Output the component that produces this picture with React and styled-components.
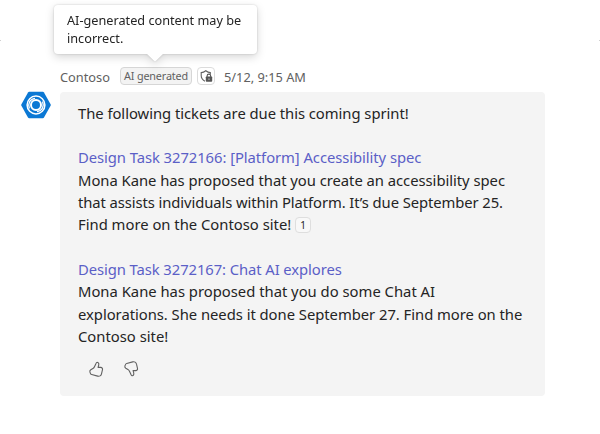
import React from "react";
import styled, { createGlobalStyle } from "styled-components";

const Global = createGlobalStyle`
  * { box-sizing: border-box; }
  body { margin: 0; background: #fff; font-family: "Noto Sans", "Open Sans", sans-serif; color: #242424; }
`;

const Page = styled.main`
  position: relative;
  width: 600px;
  height: 434px;
  padding: 67px 0 0 21px;
  overflow: hidden;
`;

const EdgeMark = styled.i`
  position: absolute;
  top: 40px;
  ${(p) => p.$side}: 0;
  width: 1px;
  height: 1px;
  background: #d0d0d0;
`;

const Tooltip = styled.div`
  position: absolute;
  left: 54px;
  top: 5px;
  width: 203px;
  height: 49px;
  padding: 6px 13px;
  border-radius: 4px;
  background: #fff;
  filter: drop-shadow(0 0 1px rgba(0, 0, 0, 0.16)) drop-shadow(0 3px 4px rgba(0, 0, 0, 0.16));
  font-size: 12.7px;
  line-height: 18px;
`;

const TooltipArrow = styled.svg`
  position: absolute;
  left: 92px;
  top: 48px;
  width: 18px;
  height: 9px;
`;

const Message = styled.article`
  display: grid;
  grid-template-columns: 39px 485px;
`;

const Avatar = styled.svg`
  grid-row: 2;
  width: 30px;
  height: 28px;
  margin-top: -1px;
`;

const Meta = styled.header`
  grid-column: 2;
  display: flex;
  align-items: center;
  height: 18px;
  margin-bottom: 7px;
  font-size: 12.8px;
  line-height: 18px;
  color: #616161;
`;

const Author = styled.span`
  width: 60px;
  padding-top: 1px;
`;

const Time = styled.time`
  padding-top: 1px;
`;

const Badge = styled.span`
  width: 72px;
  height: 18px;
  margin-right: 5px;
  border: 1px solid #d6d6d6;
  border-radius: 4px;
  background: #f3f3f3;
  font-size: 10.8px;
  letter-spacing: -0.15px;
  line-height: 16px;
  text-align: center;
`;

const ShieldBadge = styled.span`
  display: flex;
  width: 18px;
  height: 18px;
  margin-right: 9px;
  border: 1px solid #dcdcdc;
  border-radius: 4px;
`;

const Bubble = styled.section`
  grid-column: 2;
  height: 304px;
  padding: 9.6px 18px;
  border-radius: 4px;
  background: #f4f4f4;
`;

const Content = styled.div`
  display: grid;
  gap: 22.37px;
`;

const Line = styled.div`
  height: 22.37px;
  font-size: 14.8px;
  line-height: 22.37px;
  white-space: nowrap;
`;

const TaskLink = styled.a`
  color: #5b5fc7;
`;

const Fit = styled.span`
  letter-spacing: ${(p) => p.$s || 0}px;
`;

const Citation = styled.span`
  display: inline-block;
  width: 16px;
  height: 16px;
  margin-left: 4px;
  border: 1px solid #dedede;
  border-radius: 4px;
  background: #f8f8f8;
  font-size: 10px;
  line-height: 14px;
  text-align: center;
  vertical-align: 1.5px;
`;

const Feedback = styled.div`
  display: flex;
  gap: 19px;
  padding: 12px 0 0 10px;
`;

const Thumb = styled.svg`
  width: 16px;
  height: 18px;
  fill: none;
  stroke: #616161;
  stroke-width: 1.1;
  stroke-linejoin: round;
  stroke-linecap: round;
`;

const paragraphs = [
  { lines: [["The following tickets are due this coming sprint!", -0.04]] },
  {
    link: ["Design Task 3272166: [Platform] Accessibility spec", -0.06],
    lines: [
      ["Mona Kane has proposed that you create an accessibility spec", -0.03],
      ["that assists individuals within Platform. It’s due September 25.", -0.09],
      ["Find more on the Contoso site!", 0, "1"],
    ],
  },
  {
    link: ["Design Task 3272167: Chat AI explores", -0.08],
    lines: [
      ["Mona Kane has proposed that you do some Chat AI", 0],
      ["explorations. She needs it done September 27. Find more on the", -0.03],
      ["Contoso site!", 0],
    ],
  },
];

export default function App() {
  return (
    <Page>
      <Global />
      <EdgeMark $side="left" />
      <EdgeMark $side="right" />
      <Message>
        <Meta>
          <Author>Contoso</Author>
          <Badge>AI generated</Badge>
          <ShieldBadge>
            <svg width="16" height="16" viewBox="0 0 16 16">
              <path d="M7 13.2C4.6 12 3.2 10.2 3.2 7.6V4.6C5 4.5 6.3 3.9 7.8 2.7C9.3 3.9 10.6 4.5 12.3 4.6V6" fill="none" stroke="#616161" strokeWidth="1.1" />
              <path d="M9.1 9V7.9a1.8 1.8 0 0 1 3.6 0V9" fill="none" stroke="#555" strokeWidth="1.1" />
              <rect x="7.8" y="8.4" width="6.4" height="5.4" rx=".8" fill="#555" />
              <circle cx="11" cy="11.1" r=".6" fill="#fff" />
            </svg>
          </ShieldBadge>
          <Time>5/12, 9:15 AM</Time>
        </Meta>
        <Avatar viewBox="0 0 30 28">
          <path d="M8.2 .8H21.8Q22.6.8 23 1.5L29.6 13.2Q30 14 29.6 14.8L23 26.5Q22.6 27.2 21.8 27.2H8.2Q7.4 27.2 7 26.5L.4 14.8Q0 14 .4 13.2L7 1.5Q7.4.8 8.2.8Z" fill="#0b78d4" />
          <g fill="none" stroke="#fff">
            <circle cx="15" cy="14" r="8.9" strokeWidth="1.5" />
            <circle cx="15" cy="14" r="5" strokeWidth="2" />
            <path d="M8.4 17.5C6.5 12.5 9 8 14 7.3" strokeWidth="1.3" />
            <path d="M21.6 10.5C23.5 15.5 21 20 16 20.7" strokeWidth="1.3" />
          </g>
        </Avatar>
        <Bubble>
          <Content>
            {paragraphs.map((p, i) => (
              <div key={i}>
                {p.link && <Line><TaskLink><Fit $s={p.link[1]}>{p.link[0]}</Fit></TaskLink></Line>}
                {p.lines.map(([text, s, cite]) => (
                  <Line key={text}><Fit $s={s}>{text}</Fit>{cite && <Citation>{cite}</Citation>}</Line>
                ))}
              </div>
            ))}
          </Content>
          <Feedback>
            <Thumb viewBox="0 0 16 18"><path d="M9.2 2.2c1.5.2 1.8 1.8 1.5 3l-.6 2.2h2.6c1.3 0 2.1 1 1.8 2.3l-1 4.1c-.4 1.9-2 2.8-3.8 2.3l-6-1.6c-.8-.2-1.2-.6-1.4-1.4l-.4-1.2c-.3-.9.1-1.6.9-2.1l2.1-1.2c.8-.5 1.3-1.2 1.7-2.1L8 3.4c.3-.8.5-1.2 1.2-1.2Z" /></Thumb>
            <Thumb viewBox="0 0 16 18"><path d="M9.2 15.8c1.5-.2 1.8-1.8 1.5-3l-.6-2.2h2.6c1.3 0 2.1-1 1.8-2.3l-1-4.1c-.4-1.9-2-2.8-3.8-2.3l-6 1.6c-.8.2-1.2.6-1.4 1.4L1.9 6.1c-.3.9.1 1.6.9 2.1l2.1 1.2c.8.5 1.3 1.2 1.7 2.1L8 14.6c.3.8.5 1.2 1.2 1.2Z" /></Thumb>
          </Feedback>
        </Bubble>
      </Message>
      <Tooltip role="tooltip">
        AI-generated content may be<br />incorrect.
        <TooltipArrow viewBox="0 0 18 9"><path d="M0 0H18L10.2 7.6Q9 8.8 7.8 7.6Z" fill="#fff" /></TooltipArrow>
      </Tooltip>
    </Page>
  );
}
